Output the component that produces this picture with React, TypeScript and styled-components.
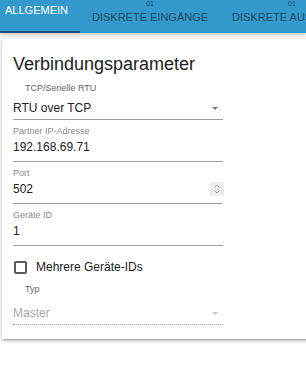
import React from "react";
import styled, { createGlobalStyle } from "styled-components";

const GlobalStyle = createGlobalStyle`
  html, body {
    margin: 0;
    padding: 0;
    background: #ffffff;
    overflow: hidden;
  }
  body {
    font-family: "Liberation Sans", Arial, sans-serif;
  }
  * { box-sizing: border-box; }
`;

const Page = styled.div`
  width: 306px;
  height: 371px;
  overflow: hidden;
`;

const TabBar = styled.nav`
  position: relative;
  z-index: 1;
  height: 33px;
  background: #3399cc;
  box-shadow: 0 2px 4px rgba(0, 0, 0, 0.22);
  overflow: hidden;
`;

const TabStrip = styled.div`
  display: flex;
  height: 100%;
  margin-left: -7px;
`;

const Tab = styled.div<{ $active?: boolean }>`
  flex-shrink: 0;
  display: flex;
  flex-direction: column;
  align-items: center;
  height: 33px;
  padding: 4px 12px 0;
  border-bottom: 2px solid ${(p) => (p.$active ? "#174d7a" : "transparent")};
  color: ${(p) => (p.$active ? "#ffffff" : "#1b4a63")};
  white-space: nowrap;
`;

const Counter = styled.span`
  font-size: 7px;
  line-height: 7px;
  margin: -4px 0 4px;
`;

const TabLabel = styled.span`
  font-size: 11px;
  line-height: 13px;
  text-transform: uppercase;
`;

const Card = styled.section`
  margin: 6px -20px 0 2px;
  padding: 13px 11px 14px;
  background: #ffffff;
  box-shadow: 0 2px 2px 0 rgba(0, 0, 0, 0.14), 0 3px 1px -2px rgba(0, 0, 0, 0.12),
    0 1px 5px 0 rgba(0, 0, 0, 0.2);
`;

const Title = styled.h2`
  margin: 0;
  font-size: 18px;
  line-height: 24px;
  font-weight: normal;
  color: #212121;
`;

const Form = styled.div`
  width: 210px;
  margin-top: 7px;
  display: flex;
  flex-direction: column;
  gap: 6px;
`;

const Field = styled.div`
  display: flex;
  flex-direction: column;
`;

const Label = styled.label<{ $indent?: boolean; $gap?: number; $dark?: boolean }>`
  font-size: 9px;
  line-height: 11px;
  color: ${(p) => (p.$dark ? "#666666" : "#8a8a8a")};
  padding-left: ${(p) => (p.$indent ? "12px" : "0")};
  margin-bottom: ${(p) => p.$gap ?? 0}px;
`;

const SelectRow = styled.div<{ $disabled?: boolean }>`
  display: flex;
  align-items: center;
  justify-content: space-between;
  height: 23px;
  line-height: 22px;
  font-size: 12px;
  color: ${(p) => (p.$disabled ? "#a8a8a8" : "#222222")};
  border-bottom: 1px ${(p) => (p.$disabled ? "dotted #a0a0a0" : "solid #9e9e9e")};
`;

const InputRow = styled.div`
  display: flex;
  align-items: center;
  justify-content: space-between;
  height: 25px;
  line-height: 20px;
  padding-bottom: 4px;
  font-size: 12px;
  color: #222222;
  border-bottom: 1px solid #9e9e9e;
`;

const Caret = styled.svg`
  width: 6px;
  height: 3px;
  margin-right: 5px;
  flex-shrink: 0;
`;

const Spinner = styled.span`
  width: 14px;
  height: 14px;
  margin-right: -1px;
  display: flex;
  align-items: center;
  justify-content: center;
  background: #eeeeee;
  border-radius: 1px;
`;

const CheckRow = styled.label`
  display: flex;
  align-items: center;
  height: 22px;
  margin-top: 4px;
  gap: 9px;
  font-size: 12px;
  color: #222222;
`;

const CheckBox = styled.span`
  width: 13px;
  height: 13px;
  margin-left: 1px;
  border: 2px solid #5a5a5a;
  border-radius: 2px;
`;

const SelectCaret = ({ color }: { color: string }) => (
  <Caret viewBox="0 0 6 3">
    <polygon points="0,0 6,0 3,3" fill={color} />
  </Caret>
);

export default function App() {
  return (
    <Page>
      <GlobalStyle />
      <TabBar>
        <TabStrip>
          <Tab $active>
            <TabLabel>Allgemein</TabLabel>
          </Tab>
          <Tab>
            <Counter>01</Counter>
            <TabLabel>Diskrete Eingänge</TabLabel>
          </Tab>
          <Tab>
            <Counter>01</Counter>
            <TabLabel>Diskrete Ausgänge</TabLabel>
          </Tab>
        </TabStrip>
      </TabBar>
      <Card>
        <Title>Verbindungsparameter</Title>
        <Form>
          <Field>
            <Label $indent $dark $gap={3}>TCP/Serielle RTU</Label>
            <SelectRow>
              <span>RTU over TCP</span>
              <SelectCaret color="#7a7a7a" />
            </SelectRow>
          </Field>
          <Field>
            <Label>Partner IP-Adresse</Label>
            <InputRow>
              <span>192.168.69.71</span>
            </InputRow>
          </Field>
          <Field>
            <Label>Port</Label>
            <InputRow>
              <span>502</span>
              <Spinner>
                <svg width="8" height="10" viewBox="0 0 8 10">
                  <path d="M1.5 3.5 L4 1 L6.5 3.5 M1.5 6.5 L4 9 L6.5 6.5" fill="none" stroke="#9a9a9a" strokeWidth="1" />
                </svg>
              </Spinner>
            </InputRow>
          </Field>
          <Field>
            <Label>Geräte ID</Label>
            <InputRow>
              <span>1</span>
            </InputRow>
          </Field>
          <CheckRow>
            <CheckBox />
            <span>Mehrere Geräte-IDs</span>
          </CheckRow>
          <Field>
            <Label $indent $dark $gap={7}>Typ</Label>
            <SelectRow $disabled>
              <span>Master</span>
              <SelectCaret color="#c4c4c4" />
            </SelectRow>
          </Field>
        </Form>
      </Card>
    </Page>
  );
}
